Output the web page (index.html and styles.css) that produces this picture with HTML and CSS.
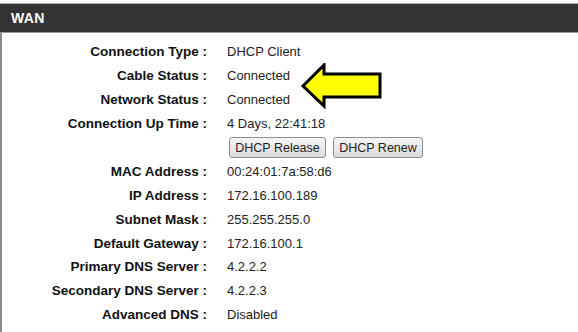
FILE: index.html
```html
<!DOCTYPE html>
<html>
<head>
<meta charset="utf-8">
<link rel="stylesheet" href="styles.css">
</head>
<body>
<div class="panel">
  <div class="header">WAN</div>
  <div class="content">
    <div class="grid">
      <div class="label">Connection Type :</div><div class="value">DHCP Client</div>
      <div class="label">Cable Status :</div><div class="value">Connected</div>
      <div class="label">Network Status :</div><div class="value">Connected</div>
      <div class="label">Connection Up Time :</div><div class="value">4 Days, 22:41:18</div>
      <div class="label"></div><div class="value buttons"><button class="btn">DHCP Release</button><button class="btn">DHCP Renew</button></div>
      <div class="label">MAC Address :</div><div class="value">00:24:01:7a:58:d6</div>
      <div class="label">IP Address :</div><div class="value">172.16.100.189</div>
      <div class="label">Subnet Mask :</div><div class="value">255.255.255.0</div>
      <div class="label">Default Gateway :</div><div class="value">172.16.100.1</div>
      <div class="label">Primary DNS Server :</div><div class="value">4.2.2.2</div>
      <div class="label">Secondary DNS Server :</div><div class="value">4.2.2.3</div>
      <div class="label">Advanced DNS :</div><div class="value">Disabled</div>
    </div>
    <svg class="arrow" width="84" height="46" viewBox="0 0 84 46">
      <path d="M3 23 L24 2 L24 11 L80 11 L80 34 L24 34 L24 43 Z" fill="#ffff00" stroke="#000" stroke-width="3" stroke-linejoin="miter"/>
    </svg>
  </div>
</div>
</body>
</html>
```

FILE: styles.css
```css
html, body {
  margin: 0;
  padding: 0;
  background: #fff;
  width: 578px;
  height: 332px;
  overflow: hidden;
}
.panel {
  padding-top: 3px;
  font-family: "Liberation Sans", Arial, sans-serif;
}
.header {
  height: 30px;
  box-sizing: border-box;
  background: #333333;
  border-top: 1px solid #b0b0b0;
  border-bottom: 1px solid #9a9a9a;
  color: #fff;
  font-weight: bold;
  font-size: 14px;
  line-height: 28px;
  padding-left: 11px;
  letter-spacing: 0.3px;
}
.content {
  position: relative;
  border-left: 2px solid #8a8a8a;
  height: 299px;
  padding-top: 7px;
  box-sizing: border-box;
}
.grid {
  display: grid;
  grid-template-columns: 205px 1fr;
  column-gap: 20px;
  grid-auto-rows: 23.9px;
  align-items: center;
}
.label {
  text-align: right;
  font-weight: bold;
  font-size: 13.5px;
  color: #111;
}
.value {
  font-size: 13px;
  color: #222;
}
.buttons {
  display: flex;
  gap: 7px;
  padding-left: 2px;
}
.btn {
  font-family: "Liberation Sans", Arial, sans-serif;
  font-size: 12.5px;
  color: #222;
  height: 21px;
  padding: 0;
  white-space: nowrap;
  border: 1px solid #8e8e8e;
  border-radius: 3px;
  background: linear-gradient(#f6f6f6, #dcdcdc);
}
.btn:first-child { width: 97px; }
.btn:last-child { width: 90px; }
.arrow {
  position: absolute;
  left: 298px;
  top: 30px;
}
```
